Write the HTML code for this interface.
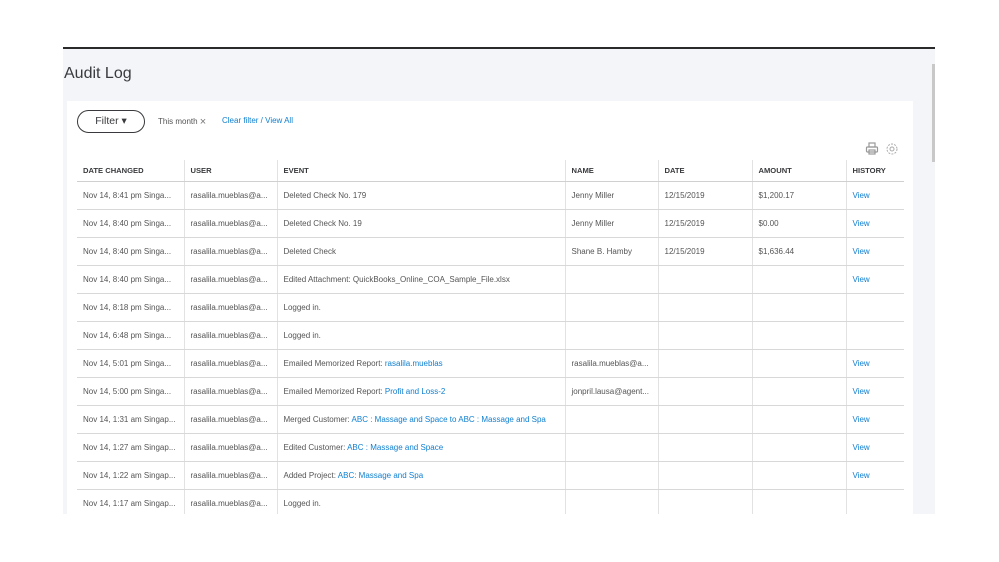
<!DOCTYPE html>
<html><head><meta charset="utf-8"><style>
*{margin:0;padding:0;box-sizing:border-box}
body{width:999px;height:562px;background:#fff;position:relative;overflow:hidden;font-family:"Liberation Sans",sans-serif;color:#393a3d}
.topline{position:absolute;left:63px;top:47px;width:872px;height:2px;background:#2a2a2a}
.gray{position:absolute;left:63px;top:49px;width:872px;height:465px;background:#f4f5f8}
.scroll{position:absolute;left:932px;top:64px;width:3px;height:98px;background:#c8c8c8}
h1{position:absolute;left:64px;top:65px;font-size:16px;font-weight:normal;color:#393a3d}
.card{position:absolute;left:67px;top:101px;width:846px;height:413px;background:#fff;overflow:hidden}
.filter{position:absolute;left:10px;top:9px;width:68px;height:23px;border:1.5px solid #393a3d;border-radius:12px;font-size:10.5px;text-align:center;line-height:20px;color:#393a3d}
.tm{position:absolute;left:91px;top:15px;font-size:8px;color:#555}
.cf{position:absolute;left:155px;top:15px;font-size:8px;color:#0f7fd0}
table{position:absolute;left:10px;top:59px;width:827px;border-collapse:collapse;font-size:8px}
td,th{height:28px;padding:0 6px;text-align:left;white-space:nowrap;overflow:hidden;border-bottom:1px solid #d8d8d8;border-left:1px solid #e2e2e2;color:#555;font-weight:normal}
th{height:21px;font-weight:bold;color:#393a3d;font-size:7.6px;border-bottom:1px solid #d0d0d0}
tr td:first-child,tr th:first-child{border-left:none}
a{color:#0f7fd0;text-decoration:none}
</style></head><body>
<div class="topline"></div>
<div class="gray"></div>
<div class="scroll"></div>
<h1>Audit Log</h1>
<div class="card">
<div class="filter">Filter ▾</div>
<div class="tm">This month <span style="font-size:11px;color:#777;vertical-align:-1px">×</span></div>
<div class="cf">Clear filter / View All</div>
<svg style="position:absolute;left:798px;top:41px" width="14" height="14" viewBox="0 0 14 14" fill="none" stroke="#999" stroke-width="1.2"><rect x="4" y="1" width="6" height="4"/><rect x="1.5" y="5" width="11" height="5" rx="1"/><rect x="4" y="8" width="6" height="4"/></svg>
<svg style="position:absolute;left:818px;top:41px" width="14" height="14" viewBox="0 0 14 14" fill="none" stroke="#aaa" stroke-width="1"><circle cx="7" cy="7" r="2"/><circle cx="7" cy="7" r="5" stroke-dasharray="2 1.2"/></svg>
<table>
<colgroup><col style="width:107px"><col style="width:93px"><col style="width:288px"><col style="width:93px"><col style="width:94px"><col style="width:94px"><col style="width:58px"></colgroup>
<tr><th>DATE CHANGED</th><th>USER</th><th>EVENT</th><th>NAME</th><th>DATE</th><th>AMOUNT</th><th>HISTORY</th></tr>
<tr><td>Nov 14, 8:41 pm Singa...</td><td>rasalila.mueblas@a...</td><td>Deleted Check No. 179</td><td>Jenny Miller</td><td>12/15/2019</td><td>$1,200.17</td><td><a>View</a></td></tr>
<tr><td>Nov 14, 8:40 pm Singa...</td><td>rasalila.mueblas@a...</td><td>Deleted Check No. 19</td><td>Jenny Miller</td><td>12/15/2019</td><td>$0.00</td><td><a>View</a></td></tr>
<tr><td>Nov 14, 8:40 pm Singa...</td><td>rasalila.mueblas@a...</td><td>Deleted Check</td><td>Shane B. Hamby</td><td>12/15/2019</td><td>$1,636.44</td><td><a>View</a></td></tr>
<tr><td>Nov 14, 8:40 pm Singa...</td><td>rasalila.mueblas@a...</td><td>Edited Attachment: QuickBooks_Online_COA_Sample_File.xlsx</td><td></td><td></td><td></td><td><a>View</a></td></tr>
<tr><td>Nov 14, 8:18 pm Singa...</td><td>rasalila.mueblas@a...</td><td>Logged in.</td><td></td><td></td><td></td><td></td></tr>
<tr><td>Nov 14, 6:48 pm Singa...</td><td>rasalila.mueblas@a...</td><td>Logged in.</td><td></td><td></td><td></td><td></td></tr>
<tr><td>Nov 14, 5:01 pm Singa...</td><td>rasalila.mueblas@a...</td><td>Emailed Memorized Report: <a>rasalila.mueblas</a></td><td>rasalila.mueblas@a...</td><td></td><td></td><td><a>View</a></td></tr>
<tr><td>Nov 14, 5:00 pm Singa...</td><td>rasalila.mueblas@a...</td><td>Emailed Memorized Report: <a>Profit and Loss-2</a></td><td>jonpril.lausa@agent...</td><td></td><td></td><td><a>View</a></td></tr>
<tr><td>Nov 14, 1:31 am Singap...</td><td>rasalila.mueblas@a...</td><td>Merged Customer: <a>ABC : Massage and Space to ABC : Massage and Spa</a></td><td></td><td></td><td></td><td><a>View</a></td></tr>
<tr><td>Nov 14, 1:27 am Singap...</td><td>rasalila.mueblas@a...</td><td>Edited Customer: <a>ABC : Massage and Space</a></td><td></td><td></td><td></td><td><a>View</a></td></tr>
<tr><td>Nov 14, 1:22 am Singap...</td><td>rasalila.mueblas@a...</td><td>Added Project: <a>ABC: Massage and Spa</a></td><td></td><td></td><td></td><td><a>View</a></td></tr>
<tr><td>Nov 14, 1:17 am Singap...</td><td>rasalila.mueblas@a...</td><td>Logged in.</td><td></td><td></td><td></td><td></td></tr>
</table>
</div>
</body></html>
